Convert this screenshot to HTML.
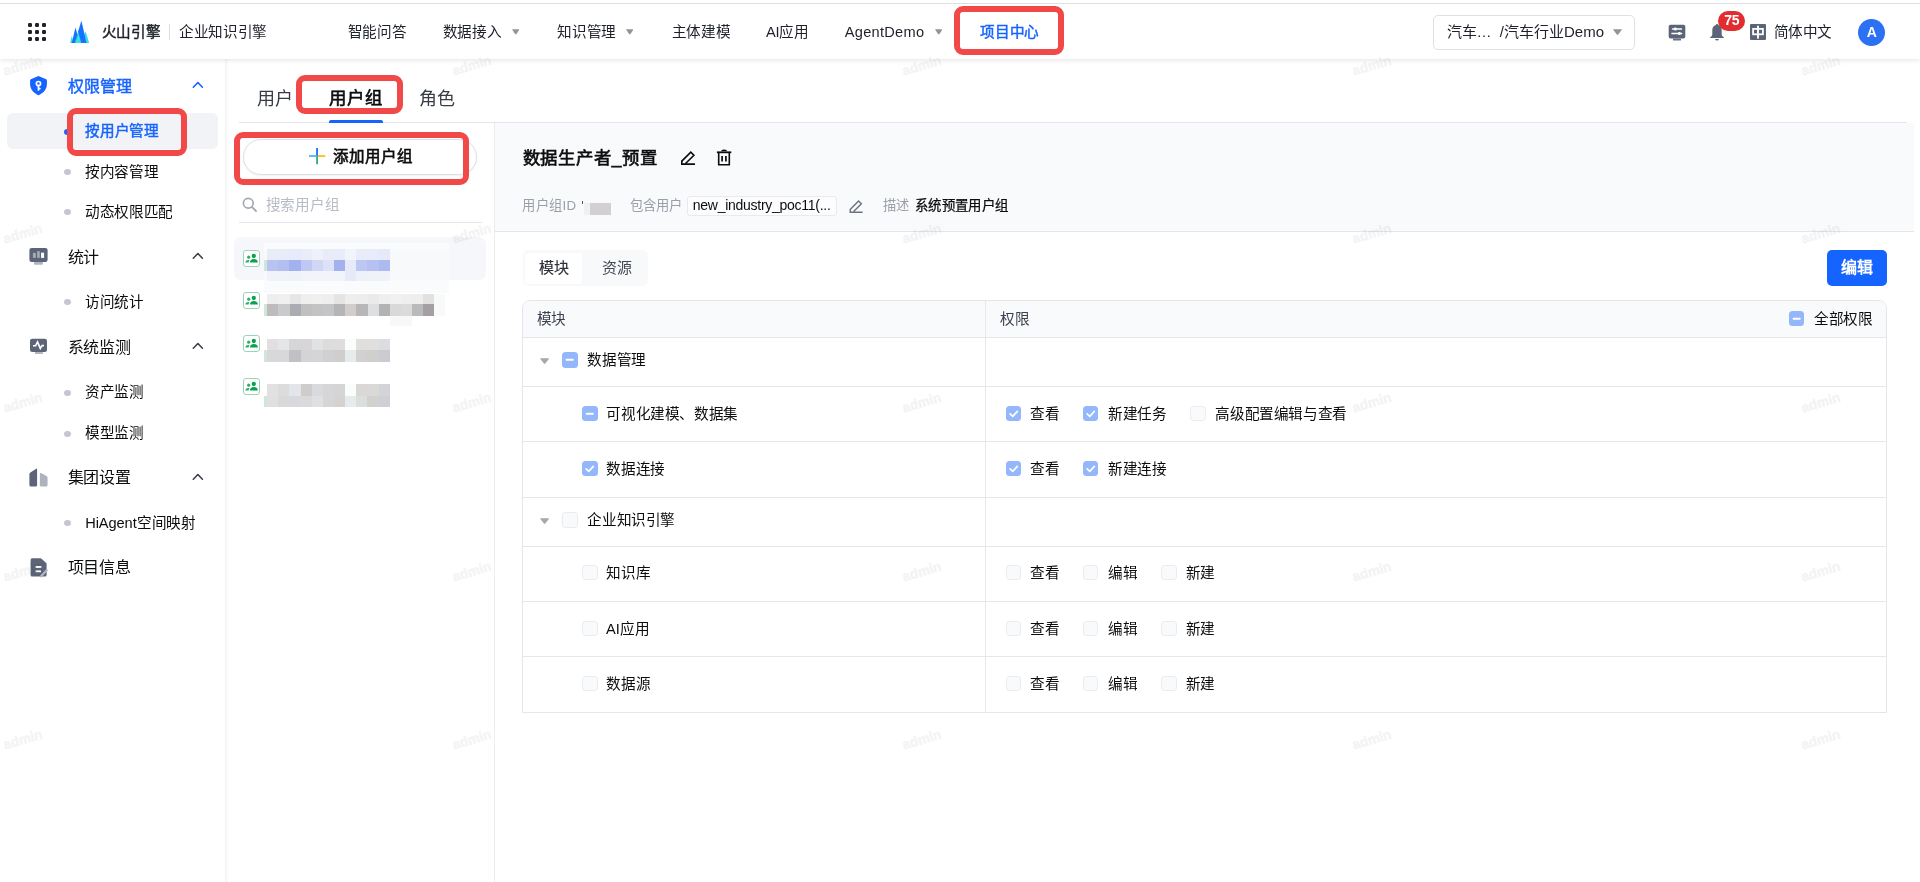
<!DOCTYPE html>
<html lang="zh-CN"><head><meta charset="utf-8"><title>权限管理 - 用户组</title>
<style>
*{box-sizing:border-box;margin:0;padding:0}
html,body{width:1920px;height:882px;overflow:hidden;background:#fff}
body{position:relative;font-family:"Liberation Sans",sans-serif;color:#0c0d0e;font-size:14.6px}
.a{position:absolute}
.t{position:absolute;white-space:nowrap;line-height:1}
.b{font-weight:700}
.m{-webkit-text-stroke-width:0.45px}
.s{-webkit-text-stroke-width:0.62px}
.wm{position:absolute;white-space:nowrap;font-size:13.5px;line-height:16px;font-weight:700;color:#000;-webkit-text-stroke:0.8px #000;opacity:.045;transform:translate(-50%,-50%) rotate(-16.5deg);width:48px;text-align:center;z-index:50;pointer-events:none}
.red{position:absolute;border:6px solid #f14848;border-radius:9px;z-index:40}
.dot{position:absolute;width:6.8px;height:6px;border-radius:50%;background:#c3c7d2;left:64.1px}
.cb{position:absolute;width:15.4px;height:15.4px;border-radius:3.5px}
.cb.e{background:#f9fafc;border:1px solid #e9ebf0}
.cb.c,.cb.i{background:#94b7fb}
.cb svg{position:absolute;left:0;top:0;width:100%;height:100%}
.hl{position:absolute;height:1px;background:#e4e6eb}
.vl{position:absolute;width:1px;background:#e6e8ed}
.gi{position:absolute;width:17px;height:17px;border:1px solid #9dd3b7;border-radius:3px;background:#fff}
.gi svg{position:absolute;left:0;top:0}
</style></head><body><div id="app" style="position:absolute;left:0;top:0;width:1920px;height:882px;will-change:transform">

<div class="a" style="left:0;top:0;width:1920px;height:59px;background:#fff;box-shadow:0 1px 5px rgba(0,0,0,.11);z-index:5"></div>
<div class="a" style="left:0;top:2.5px;width:1920px;height:1px;background:#dde0dd;z-index:6"></div>
<div id="hdr" class="a" style="left:0;top:0;width:1920px;height:59px;z-index:7">
<svg class="a" style="left:0;top:0" width="100" height="59" viewBox="0 0 100 59"><rect x="28" y="23" width="4" height="4" rx="1.2" fill="#1f2329"/><rect x="28" y="30" width="4" height="4" rx="1.2" fill="#1f2329"/><rect x="28" y="37" width="4" height="4" rx="1.2" fill="#1f2329"/><rect x="35" y="23" width="4" height="4" rx="1.2" fill="#1f2329"/><rect x="35" y="30" width="4" height="4" rx="1.2" fill="#1f2329"/><rect x="35" y="37" width="4" height="4" rx="1.2" fill="#1f2329"/><rect x="42" y="23" width="4" height="4" rx="1.2" fill="#1f2329"/><rect x="42" y="30" width="4" height="4" rx="1.2" fill="#1f2329"/><rect x="42" y="37" width="4" height="4" rx="1.2" fill="#1f2329"/><polygon points="70.2,43 71.8,35.5 73.6,43" fill="#3be0dc"/><polygon points="84.2,34 85.7,31.5 89.2,43 86.4,43" fill="#3be0dc"/><polygon points="74.8,43 78.6,29.5 81.6,43" fill="#3be0dc"/><polygon points="71.7,43 75.5,27.5 77.6,35 75,43" fill="#1673ff"/><polygon points="78.1,31.5 81.4,20.7 86.6,43 81.2,43" fill="#1673ff"/></svg>
<div class="t m" style="left:101.80px;top:25.00px;font-size:14.6px;height:14.6px;color:#1d2129;letter-spacing:-0.40px;">火山引擎</div>
<div class="a" style="left:169px;top:24px;width:1px;height:16px;background:#dcdee3"></div>
<div class="t " style="left:178.90px;top:25.00px;font-size:14.6px;height:14.6px;color:#1d2129;letter-spacing:-0.28px;">企业知识引擎</div>
<div class="t " style="left:347.70px;top:25.00px;font-size:14.6px;height:14.6px;color:#1d2129;letter-spacing:-0.30px;">智能问答</div>
<div class="t " style="left:442.70px;top:25.00px;font-size:14.6px;height:14.6px;color:#1d2129;letter-spacing:-0.30px;">数据接入</div>
<div class="t " style="left:557.40px;top:25.00px;font-size:14.6px;height:14.6px;color:#1d2129;letter-spacing:-0.30px;">知识管理</div>
<div class="t " style="left:671.80px;top:25.00px;font-size:14.6px;height:14.6px;color:#1d2129;letter-spacing:-0.30px;">主体建模</div>
<div class="t " style="left:766.00px;top:25.00px;font-size:14.6px;height:14.6px;color:#1d2129;letter-spacing:-0.30px;">AI应用</div>
<div class="t " style="left:844.80px;top:25.00px;font-size:14.6px;height:14.6px;color:#1d2129;letter-spacing:0.27px;">AgentDemo</div>
<div class="t m" style="left:980.40px;top:25.00px;font-size:14.6px;height:14.6px;color:#1664ff;letter-spacing:-0.30px;">项目中心</div>
<svg class="a" style="left:511.7px;top:29.2px" width="7.5" height="5.5" viewBox="0 0 7.5 5.5"><path d="M0.3 0.3H7.2Q7.5 0.6 7.1 1L4.25 5.2Q3.75 5.5 3.25 5.2L0.4 1Q0 0.6 0.3 0.3Z" fill="#8f959e"/></svg>
<svg class="a" style="left:625.8px;top:29.2px" width="7.5" height="5.5" viewBox="0 0 7.5 5.5"><path d="M0.3 0.3H7.2Q7.5 0.6 7.1 1L4.25 5.2Q3.75 5.5 3.25 5.2L0.4 1Q0 0.6 0.3 0.3Z" fill="#8f959e"/></svg>
<svg class="a" style="left:934.7px;top:29.2px" width="7.5" height="5.5" viewBox="0 0 7.5 5.5"><path d="M0.3 0.3H7.2Q7.5 0.6 7.1 1L4.25 5.2Q3.75 5.5 3.25 5.2L0.4 1Q0 0.6 0.3 0.3Z" fill="#8f959e"/></svg>
<div class="a" style="left:1433px;top:14.5px;width:202px;height:35px;border:1px solid #dde0e7;border-radius:5px;background:#fff"></div>
<div class="t " style="left:1446.50px;top:24.00px;font-size:15px;height:15px;color:#1d2129;">汽车…&nbsp;&nbsp;/汽车行业Demo</div>
<svg class="a" style="left:1613px;top:29.4px" width="9" height="6" viewBox="0 0 9 6"><path d="M0.3 0.3H8.7Q9 0.6 8.6 1L5.0 5.7Q4.5 6 4.0 5.7L0.4 1Q0 0.6 0.3 0.3Z" fill="#8f959e"/></svg>
<svg class="a" style="left:1666px;top:22px" width="22" height="22" viewBox="0 0 22 22"><rect x="2.7" y="2.8" width="16.6" height="13.8" rx="1.8" fill="#5c6578"/><rect x="7" y="16.6" width="8" height="2" rx="0.6" fill="#6a7283"/><rect x="5.8" y="6.3" width="10.4" height="1.4" rx="0.7" fill="#fff"/><rect x="8" y="5.6" width="2.6" height="2.8" rx="1" fill="#fff"/><rect x="5.2" y="10.8" width="11.2" height="1.4" rx="0.7" fill="#fff"/><rect x="12" y="10.1" width="2.6" height="2.8" rx="1" fill="#fff"/></svg>
<svg class="a" style="left:1708px;top:22px" width="18" height="20" viewBox="0 0 18 20"><path d="M9 2C9.7 2 10.1 2.5 10.1 3.1C12.4 3.7 13.7 5.6 13.7 8V12.2C13.7 13.4 14.6 14.6 15.9 15.4C16.2 15.6 16.1 16 15.7 16H2.3C1.9 16 1.8 15.6 2.1 15.4C3.4 14.6 4.3 13.4 4.3 12.2V8C4.3 5.6 5.6 3.7 7.9 3.1C7.9 2.5 8.3 2 9 2Z" fill="#5c6578"/><path d="M7 17H11Q10.4 18.6 9 18.6Q7.6 18.6 7 17Z" fill="#5c6578"/></svg>
<div class="a" style="left:1718.4px;top:10.6px;width:27px;height:20.2px;border-radius:10.1px;background:#e22c30;z-index:2"></div>
<div class="t b" style="left:1724.30px;top:13.00px;font-size:14px;height:14px;color:#fff;z-index:3;letter-spacing:-0.3px">75</div>
<div class="a" style="left:1750px;top:24px;width:16px;height:16px;background:#5c6578;border-radius:1px"></div>
<svg class="a" style="left:1750px;top:24px" width="16" height="16" viewBox="0 0 16 16"><title>中</title><rect x="3.1" y="4.9" width="9.8" height="5.4" fill="none" stroke="#fff" stroke-width="1.8"/><rect x="7.05" y="1.7" width="1.9" height="12.9" fill="#fff"/></svg>
<div class="t " style="left:1773.50px;top:25.00px;font-size:14.6px;height:14.6px;color:#1d2129;letter-spacing:-0.45px;">简体中文</div>
<div class="a" style="left:1858px;top:19px;width:27.4px;height:27.4px;border-radius:50%;background:#2c70f4"></div>
<div class="t b" style="left:1866.70px;top:25.00px;font-size:14px;height:14px;color:#fff;">A</div>
</div>
<div class="a" style="left:224.6px;top:59px;width:4.6px;height:823px;background:linear-gradient(to right,#f3f3f4 0%,#f6f6f7 25%,#fbfbfb 60%,#fff 100%)"></div>
<div class="a" style="left:7px;top:113px;width:211px;height:36px;border-radius:6px;background:#f2f3f6"></div>
<svg class="a" style="left:28px;top:74px" width="22" height="23" viewBox="0 0 22 23"><path d="M10.5 1.9L18.2 5.2Q18.9 5.5 18.9 6.3V10.6C18.7 15.2 15.6 19.1 11.2 21Q10.5 21.3 9.8 21C5.4 19.1 2.3 15.2 2.1 10.6V6.3Q2.1 5.5 2.8 5.2Z" fill="#1664ff"/><circle cx="10.45" cy="9.6" r="2.1" fill="none" stroke="#fff" stroke-width="1.7"/><path d="M10.45 11.6V15.9M10.45 14.2L11.9 14.6" stroke="#fff" stroke-width="1.7" fill="none" stroke-linecap="round"/></svg>
<div class="t m" style="left:67.80px;top:79.00px;font-size:16px;height:16px;color:#1664ff;">权限管理</div>
<svg class="a" style="left:190.7px;top:78.5px" width="14" height="10" viewBox="0 0 14 10"><path d="M2.3 8.2L6.9 3.5L11.4 8.2" fill="none" stroke="#1664ff" stroke-width="1.6" stroke-linecap="round" stroke-linejoin="round"/></svg>
<div class="dot" style="top:128.5px;background:#1664ff"></div>
<div class="t m" style="left:85.30px;top:124.00px;font-size:14.6px;height:14.6px;color:#1664ff;letter-spacing:-0.38px;">按用户管理</div>
<div class="dot" style="top:169.4px"></div>
<div class="t " style="left:85.20px;top:165.00px;font-size:14.6px;height:14.6px;color:#0c0d0e;letter-spacing:-0.38px;">按内容管理</div>
<div class="dot" style="top:209.4px"></div>
<div class="t " style="left:85.20px;top:205.00px;font-size:14.6px;height:14.6px;color:#0c0d0e;letter-spacing:-0.38px;">动态权限匹配</div>
<div class="dot" style="top:299.4px"></div>
<div class="t " style="left:85.20px;top:295.00px;font-size:14.6px;height:14.6px;color:#0c0d0e;letter-spacing:-0.38px;">访问统计</div>
<div class="dot" style="top:389.5px"></div>
<div class="t " style="left:85.20px;top:385.00px;font-size:14.6px;height:14.6px;color:#0c0d0e;letter-spacing:-0.38px;">资产监测</div>
<div class="dot" style="top:430.5px"></div>
<div class="t " style="left:85.20px;top:426.00px;font-size:14.6px;height:14.6px;color:#0c0d0e;letter-spacing:-0.38px;">模型监测</div>
<div class="dot" style="top:520.3px"></div>
<div class="t " style="left:85.20px;top:516.00px;font-size:14.6px;height:14.6px;color:#0c0d0e;letter-spacing:-0.07px;">HiAgent空间映射</div>
<div class="t " style="left:67.50px;top:250.00px;font-size:16px;height:16px;color:#0c0d0e;letter-spacing:-0.15px;">统计</div>
<div class="t " style="left:67.50px;top:340.00px;font-size:16px;height:16px;color:#0c0d0e;letter-spacing:-0.15px;">系统监测</div>
<div class="t " style="left:67.50px;top:470.00px;font-size:16px;height:16px;color:#0c0d0e;letter-spacing:-0.15px;">集团设置</div>
<div class="t " style="left:67.50px;top:560.00px;font-size:16px;height:16px;color:#0c0d0e;letter-spacing:-0.15px;">项目信息</div>
<svg class="a" style="left:190.7px;top:250.2px" width="14" height="10" viewBox="0 0 14 10"><path d="M2.3 8.2L6.9 3.5L11.4 8.2" fill="none" stroke="#3a3f4a" stroke-width="1.6" stroke-linecap="round" stroke-linejoin="round"/></svg>
<svg class="a" style="left:190.7px;top:339.8px" width="14" height="10" viewBox="0 0 14 10"><path d="M2.3 8.2L6.9 3.5L11.4 8.2" fill="none" stroke="#3a3f4a" stroke-width="1.6" stroke-linecap="round" stroke-linejoin="round"/></svg>
<svg class="a" style="left:190.7px;top:470.6px" width="14" height="10" viewBox="0 0 14 10"><path d="M2.3 8.2L6.9 3.5L11.4 8.2" fill="none" stroke="#3a3f4a" stroke-width="1.6" stroke-linecap="round" stroke-linejoin="round"/></svg>
<svg class="a" style="left:28px;top:246px" width="22" height="21" viewBox="0 0 22 21"><rect x="6" y="15.5" width="8.9" height="3.2" rx="1" fill="#b0b5c0"/><rect x="1.4" y="1.9" width="18.2" height="14.1" rx="2.2" fill="#5c6578"/><rect x="4.9" y="6.9" width="2.9" height="5" fill="#a4a9b6"/><rect x="9.1" y="5.2" width="2.7" height="6.7" fill="#a4a9b6"/><rect x="13" y="6.7" width="3.1" height="5.2" fill="#fff"/></svg>
<svg class="a" style="left:28px;top:336px" width="22" height="21" viewBox="0 0 22 21"><rect x="7" y="15.5" width="7.9" height="2.6" rx="0.6" fill="#b0b5c0"/><rect x="2" y="2.7" width="17" height="13.3" rx="2.2" fill="#5c6578"/><path d="M5 9.8H7.6L9.5 5.9L12.3 12.4L14 9.6H16" fill="none" stroke="#fff" stroke-width="1.6" stroke-linejoin="miter"/></svg>
<svg class="a" style="left:28px;top:466px" width="22" height="23" viewBox="0 0 22 23"><path d="M1.4 8.2Q1.4 7 2.4 6.4L8.2 2.7Q9.1 2.2 9.1 3.3V19.1Q9.1 20.6 7.6 20.6H2.9Q1.4 20.6 1.4 19.1Z" fill="#5c6578"/><path d="M11.85 7.9Q11.85 6.6 13 7.1L18.5 9.9Q19.55 10.4 19.55 11.6V19.1Q19.55 20.6 18.05 20.6H13.35Q11.85 20.6 11.85 19.1Z" fill="#aeb2bc"/></svg>
<svg class="a" style="left:28px;top:556px" width="22" height="23" viewBox="0 0 22 23"><path d="M4.1 2.3H12.6Q13.2 2.3 13.6 2.7L18.2 7Q18.6 7.4 18.6 8V19.1Q18.6 20.6 17.1 20.6H4.1Q2.6 20.6 2.6 19.1V3.8Q2.6 2.3 4.1 2.3Z" fill="#5c6578"/><rect x="7.6" y="10" width="5.8" height="1.9" fill="#fff"/><rect x="7.6" y="14.4" width="5.4" height="1.8" fill="#fff"/><path d="M12.4 20.9L19.3 13.6" stroke="#b0b5c0" stroke-width="2.2"/></svg>
<div class="t " style="left:256.60px;top:90.00px;font-size:18px;height:18px;color:#373c44;">用户</div>
<div class="t s" style="left:329.00px;top:90.00px;font-size:17.4px;height:17.4px;color:#0c0d0e;letter-spacing:1.10px;">用户组</div>
<div class="t " style="left:418.50px;top:90.00px;font-size:18px;height:18px;color:#373c44;">角色</div>
<div class="hl" style="left:239px;top:122px;width:1668px"></div>
<div class="a" style="left:329px;top:119.8px;width:54px;height:3.2px;background:#1664ff;border-radius:2px 2px 0 0"></div>
<div class="vl" style="left:494px;top:123px;height:759px;background:#eaecf0"></div>
<div class="a" style="left:243px;top:139px;width:234px;height:36px;border:1px solid #dcdfe4;border-radius:18px;background:#fff;box-shadow:0 1px 2px rgba(0,0,0,.06)"></div>
<svg class="a" style="left:309px;top:148px" width="17" height="17" viewBox="0 0 17 17"><rect x="7.2" y="0" width="1.7" height="8.1" fill="#1664ff"/><rect x="7.2" y="8.1" width="1.7" height="8.2" fill="#2ba471"/><rect x="0" y="7.2" width="8" height="1.7" fill="#3cb1ff"/><rect x="8.9" y="7.2" width="7.4" height="1.7" fill="#ffb700"/></svg>
<div class="t s" style="left:333.40px;top:149.00px;font-size:15.5px;height:15.5px;color:#0c0d0e;letter-spacing:-0.15px;">添加用户组</div>
<svg class="a" style="left:241px;top:196px" width="17" height="17" viewBox="0 0 17 17"><circle cx="7.3" cy="7.2" r="4.9" fill="none" stroke="#a3a9b3" stroke-width="1.7"/><path d="M10.9 10.9L15 15" stroke="#a3a9b3" stroke-width="1.8" stroke-linecap="round"/></svg>
<div class="t " style="left:265.80px;top:198.00px;font-size:14.6px;height:14.6px;color:#b7bcc6;letter-spacing:-0.30px;">搜索用户组</div>
<div class="hl" style="left:239px;top:222px;width:243px"></div>
<div class="a" style="left:234px;top:237px;width:252px;height:43px;border-radius:7px;background:#f6f7fa"></div>
<div class="a" style="left:264px;top:243px;width:185px;height:7.5px;background:#fafbfc"></div>
<div class="a" style="left:264px;top:250.5px;width:185px;height:29.5px;background:#f8f9fb"></div>
<div class="a" style="left:264px;top:280px;width:185px;height:13px;background:#fafbfc"></div>
<div class="gi" style="left:243px;top:250px"><svg width="15" height="15" viewBox="0 0 15 15"><circle cx="9.8" cy="5.0" r="2.15" fill="#0ba24f"/><path d="M5.9 11.1Q5.9 11.5 6.4 11.5H13.5Q14 11.5 13.9 11.1Q13.3 7.9 9.9 7.9Q6.5 7.9 5.9 11.1Z" fill="#0ba24f"/><circle cx="4.7" cy="6.2" r="1.6" fill="#33ae69"/><path d="M1.3 11Q1.2 11.4 1.7 11.4H4.6Q5 9.7 5.6 9.2Q5.2 8.9 4.5 8.9Q1.9 8.9 1.3 11Z" fill="#33ae69"/></svg></div>
<div class="gi" style="left:243px;top:292.2px"><svg width="15" height="15" viewBox="0 0 15 15"><circle cx="9.8" cy="5.0" r="2.15" fill="#0ba24f"/><path d="M5.9 11.1Q5.9 11.5 6.4 11.5H13.5Q14 11.5 13.9 11.1Q13.3 7.9 9.9 7.9Q6.5 7.9 5.9 11.1Z" fill="#0ba24f"/><circle cx="4.7" cy="6.2" r="1.6" fill="#33ae69"/><path d="M1.3 11Q1.2 11.4 1.7 11.4H4.6Q5 9.7 5.6 9.2Q5.2 8.9 4.5 8.9Q1.9 8.9 1.3 11Z" fill="#33ae69"/></svg></div>
<div class="gi" style="left:243px;top:335px"><svg width="15" height="15" viewBox="0 0 15 15"><circle cx="9.8" cy="5.0" r="2.15" fill="#0ba24f"/><path d="M5.9 11.1Q5.9 11.5 6.4 11.5H13.5Q14 11.5 13.9 11.1Q13.3 7.9 9.9 7.9Q6.5 7.9 5.9 11.1Z" fill="#0ba24f"/><circle cx="4.7" cy="6.2" r="1.6" fill="#33ae69"/><path d="M1.3 11Q1.2 11.4 1.7 11.4H4.6Q5 9.7 5.6 9.2Q5.2 8.9 4.5 8.9Q1.9 8.9 1.3 11Z" fill="#33ae69"/></svg></div>
<div class="gi" style="left:243px;top:378px"><svg width="15" height="15" viewBox="0 0 15 15"><circle cx="9.8" cy="5.0" r="2.15" fill="#0ba24f"/><path d="M5.9 11.1Q5.9 11.5 6.4 11.5H13.5Q14 11.5 13.9 11.1Q13.3 7.9 9.9 7.9Q6.5 7.9 5.9 11.1Z" fill="#0ba24f"/><circle cx="4.7" cy="6.2" r="1.6" fill="#33ae69"/><path d="M1.3 11Q1.2 11.4 1.7 11.4H4.6Q5 9.7 5.6 9.2Q5.2 8.9 4.5 8.9Q1.9 8.9 1.3 11Z" fill="#33ae69"/></svg></div>
<div class="a" style="left:267.20px;top:249px;width:11.44px;height:10.60px;background:#e8ebf8"></div>
<div class="a" style="left:278.34px;top:249px;width:11.44px;height:10.60px;background:#e8ebf8"></div>
<div class="a" style="left:289.48px;top:249px;width:11.44px;height:10.60px;background:#e7eaf8"></div>
<div class="a" style="left:300.62px;top:249px;width:11.44px;height:10.60px;background:#eaedf9"></div>
<div class="a" style="left:311.76px;top:249px;width:11.44px;height:10.60px;background:#eef0fa"></div>
<div class="a" style="left:322.90px;top:249px;width:11.44px;height:10.60px;background:#e8ebf8"></div>
<div class="a" style="left:334.04px;top:249px;width:11.44px;height:10.60px;background:#e8ebf8"></div>
<div class="a" style="left:345.18px;top:249px;width:11.44px;height:10.60px;background:#f2f4fb"></div>
<div class="a" style="left:356.32px;top:249px;width:11.44px;height:10.60px;background:#e9ecf8"></div>
<div class="a" style="left:367.46px;top:249px;width:11.44px;height:10.60px;background:#e8ebf8"></div>
<div class="a" style="left:378.60px;top:249px;width:11.44px;height:10.60px;background:#e6e9f8"></div>
<div class="a" style="left:267.20px;top:259.6px;width:11.44px;height:11.70px;background:#b8c3f2"></div>
<div class="a" style="left:278.34px;top:259.6px;width:11.44px;height:11.70px;background:#b3bff0"></div>
<div class="a" style="left:289.48px;top:259.6px;width:11.44px;height:11.70px;background:#a3b2ee"></div>
<div class="a" style="left:300.62px;top:259.6px;width:11.44px;height:11.70px;background:#bfc8f3"></div>
<div class="a" style="left:311.76px;top:259.6px;width:11.44px;height:11.70px;background:#cfd7f5"></div>
<div class="a" style="left:322.90px;top:259.6px;width:11.44px;height:11.70px;background:#dde2f8"></div>
<div class="a" style="left:334.04px;top:259.6px;width:11.44px;height:11.70px;background:#a3b1ee"></div>
<div class="a" style="left:345.18px;top:259.6px;width:11.44px;height:11.70px;background:#e6eaf9"></div>
<div class="a" style="left:356.32px;top:259.6px;width:11.44px;height:11.70px;background:#bcc7f2"></div>
<div class="a" style="left:367.46px;top:259.6px;width:11.44px;height:11.70px;background:#b6c1f1"></div>
<div class="a" style="left:378.60px;top:259.6px;width:11.44px;height:11.70px;background:#adbaf0"></div>
<div class="a" style="left:267.20px;top:271.3px;width:11.44px;height:10.20px;background:#f1f3fa"></div>
<div class="a" style="left:278.34px;top:271.3px;width:11.44px;height:10.20px;background:#f1f3fa"></div>
<div class="a" style="left:289.48px;top:271.3px;width:11.44px;height:10.20px;background:#f0f2fa"></div>
<div class="a" style="left:300.62px;top:271.3px;width:11.44px;height:10.20px;background:#f2f4fb"></div>
<div class="a" style="left:311.76px;top:271.3px;width:11.44px;height:10.20px;background:#f3f4fb"></div>
<div class="a" style="left:322.90px;top:271.3px;width:11.44px;height:10.20px;background:#f3f4fb"></div>
<div class="a" style="left:334.04px;top:271.3px;width:11.44px;height:10.20px;background:#f2f4fb"></div>
<div class="a" style="left:345.18px;top:271.3px;width:11.44px;height:10.20px;background:#e5e9f8"></div>
<div class="a" style="left:356.32px;top:271.3px;width:11.44px;height:10.20px;background:#eef1fa"></div>
<div class="a" style="left:367.46px;top:271.3px;width:11.44px;height:10.20px;background:#f0f2fa"></div>
<div class="a" style="left:378.60px;top:271.3px;width:11.44px;height:10.20px;background:#f0f2fa"></div>
<div class="a" style="left:264.1px;top:259.6px;width:3.1px;height:11.7px;background:#cfe6da"></div>
<div class="a" style="left:267.20px;top:294.3px;width:11.45px;height:10.10px;background:#efeeee"></div>
<div class="a" style="left:278.35px;top:294.3px;width:11.45px;height:10.10px;background:#f0f0f0"></div>
<div class="a" style="left:289.50px;top:294.3px;width:11.45px;height:10.10px;background:#e6e6e6"></div>
<div class="a" style="left:300.65px;top:294.3px;width:11.45px;height:10.10px;background:#f0efef"></div>
<div class="a" style="left:311.80px;top:294.3px;width:11.45px;height:10.10px;background:#f0f0ef"></div>
<div class="a" style="left:322.95px;top:294.3px;width:11.45px;height:10.10px;background:#eeeeee"></div>
<div class="a" style="left:334.10px;top:294.3px;width:11.45px;height:10.10px;background:#e4e4e4"></div>
<div class="a" style="left:345.25px;top:294.3px;width:11.45px;height:10.10px;background:#efeeed"></div>
<div class="a" style="left:356.40px;top:294.3px;width:11.45px;height:10.10px;background:#eeeded"></div>
<div class="a" style="left:367.55px;top:294.3px;width:11.45px;height:10.10px;background:#ebeaea"></div>
<div class="a" style="left:378.70px;top:294.3px;width:11.45px;height:10.10px;background:#efefef"></div>
<div class="a" style="left:389.85px;top:294.3px;width:11.45px;height:10.10px;background:#f1f1f1"></div>
<div class="a" style="left:401.00px;top:294.3px;width:11.45px;height:10.10px;background:#f0efef"></div>
<div class="a" style="left:412.15px;top:294.3px;width:11.45px;height:10.10px;background:#eeeeee"></div>
<div class="a" style="left:423.30px;top:294.3px;width:11.45px;height:10.10px;background:#e3e1e0"></div>
<div class="a" style="left:267.20px;top:304.4px;width:11.45px;height:11.80px;background:#bfbabb"></div>
<div class="a" style="left:278.35px;top:304.4px;width:11.45px;height:11.80px;background:#c9cacc"></div>
<div class="a" style="left:289.50px;top:304.4px;width:11.45px;height:11.80px;background:#a9acb1"></div>
<div class="a" style="left:300.65px;top:304.4px;width:11.45px;height:11.80px;background:#c2bfc0"></div>
<div class="a" style="left:311.80px;top:304.4px;width:11.45px;height:11.80px;background:#c4c3c4"></div>
<div class="a" style="left:322.95px;top:304.4px;width:11.45px;height:11.80px;background:#c4c5c6"></div>
<div class="a" style="left:334.10px;top:304.4px;width:11.45px;height:11.80px;background:#b5b5b7"></div>
<div class="a" style="left:345.25px;top:304.4px;width:11.45px;height:11.80px;background:#d2cdcb"></div>
<div class="a" style="left:356.40px;top:304.4px;width:11.45px;height:11.80px;background:#b7b7ba"></div>
<div class="a" style="left:367.55px;top:304.4px;width:11.45px;height:11.80px;background:#dedfe1"></div>
<div class="a" style="left:378.70px;top:304.4px;width:11.45px;height:11.80px;background:#b3b3b5"></div>
<div class="a" style="left:389.85px;top:304.4px;width:11.45px;height:11.80px;background:#d9d9da"></div>
<div class="a" style="left:401.00px;top:304.4px;width:11.45px;height:11.80px;background:#dcdbdb"></div>
<div class="a" style="left:412.15px;top:304.4px;width:11.45px;height:11.80px;background:#b9babd"></div>
<div class="a" style="left:423.30px;top:304.4px;width:11.45px;height:11.80px;background:#a49fa2"></div>
<div class="a" style="left:264.1px;top:304.4px;width:3.1px;height:11.8px;background:#cfe6da"></div>
<div class="a" style="left:434.4px;top:294.3px;width:10.6px;height:21.9px;background:#f8fafa"></div>
<div class="a" style="left:389.8px;top:316.4px;width:22.3px;height:9.5px;background:#f8f8f9"></div>
<div class="a" style="left:267.20px;top:339px;width:11.44px;height:11.40px;background:#e1dfe0"></div>
<div class="a" style="left:278.34px;top:339px;width:11.44px;height:11.40px;background:#e4e5e6"></div>
<div class="a" style="left:289.48px;top:339px;width:11.44px;height:11.40px;background:#d6d6d8"></div>
<div class="a" style="left:300.62px;top:339px;width:11.44px;height:11.40px;background:#d7d5d7"></div>
<div class="a" style="left:311.76px;top:339px;width:11.44px;height:11.40px;background:#e1e3e3"></div>
<div class="a" style="left:322.90px;top:339px;width:11.44px;height:11.40px;background:#dcdcdd"></div>
<div class="a" style="left:334.04px;top:339px;width:11.44px;height:11.40px;background:#dedddc"></div>
<div class="a" style="left:345.18px;top:339px;width:11.44px;height:11.40px;background:#fbfdfd"></div>
<div class="a" style="left:356.32px;top:339px;width:11.44px;height:11.40px;background:#e1dfde"></div>
<div class="a" style="left:367.46px;top:339px;width:11.44px;height:11.40px;background:#e0dfde"></div>
<div class="a" style="left:378.60px;top:339px;width:11.44px;height:11.40px;background:#dcdde0"></div>
<div class="a" style="left:267.20px;top:350.4px;width:11.44px;height:11.20px;background:#d8d7d9"></div>
<div class="a" style="left:278.34px;top:350.4px;width:11.44px;height:11.20px;background:#d8d8da"></div>
<div class="a" style="left:289.48px;top:350.4px;width:11.44px;height:11.20px;background:#bfc1c4"></div>
<div class="a" style="left:300.62px;top:350.4px;width:11.44px;height:11.20px;background:#d5d3d5"></div>
<div class="a" style="left:311.76px;top:350.4px;width:11.44px;height:11.20px;background:#d5d5d8"></div>
<div class="a" style="left:322.90px;top:350.4px;width:11.44px;height:11.20px;background:#d0d0d2"></div>
<div class="a" style="left:334.04px;top:350.4px;width:11.44px;height:11.20px;background:#d0cecd"></div>
<div class="a" style="left:345.18px;top:350.4px;width:11.44px;height:11.20px;background:#e6ecee"></div>
<div class="a" style="left:356.32px;top:350.4px;width:11.44px;height:11.20px;background:#d0d1d0"></div>
<div class="a" style="left:367.46px;top:350.4px;width:11.44px;height:11.20px;background:#d1cfce"></div>
<div class="a" style="left:378.60px;top:350.4px;width:11.44px;height:11.20px;background:#cbccd1"></div>
<div class="a" style="left:264.1px;top:350.4px;width:3.1px;height:11.2px;background:#cfe6da"></div>
<div class="a" style="left:267.20px;top:384.3px;width:11.44px;height:11.30px;background:#e2e0e1"></div>
<div class="a" style="left:278.34px;top:384.3px;width:11.44px;height:11.30px;background:#dcdcdd"></div>
<div class="a" style="left:289.48px;top:384.3px;width:11.44px;height:11.30px;background:#e3e5e8"></div>
<div class="a" style="left:300.62px;top:384.3px;width:11.44px;height:11.30px;background:#cfcdcc"></div>
<div class="a" style="left:311.76px;top:384.3px;width:11.44px;height:11.30px;background:#d9dadd"></div>
<div class="a" style="left:322.90px;top:384.3px;width:11.44px;height:11.30px;background:#d7d6d7"></div>
<div class="a" style="left:334.04px;top:384.3px;width:11.44px;height:11.30px;background:#d6d5d5"></div>
<div class="a" style="left:345.18px;top:384.3px;width:11.44px;height:11.30px;background:#fbfdfd"></div>
<div class="a" style="left:356.32px;top:384.3px;width:11.44px;height:11.30px;background:#dad8d7"></div>
<div class="a" style="left:367.46px;top:384.3px;width:11.44px;height:11.30px;background:#dbd9d8"></div>
<div class="a" style="left:378.60px;top:384.3px;width:11.44px;height:11.30px;background:#d3d4da"></div>
<div class="a" style="left:267.20px;top:395.6px;width:11.44px;height:11.10px;background:#e1dfdf"></div>
<div class="a" style="left:278.34px;top:395.6px;width:11.44px;height:11.10px;background:#d9d9da"></div>
<div class="a" style="left:289.48px;top:395.6px;width:11.44px;height:11.10px;background:#d8d9dc"></div>
<div class="a" style="left:300.62px;top:395.6px;width:11.44px;height:11.10px;background:#dbd9db"></div>
<div class="a" style="left:311.76px;top:395.6px;width:11.44px;height:11.10px;background:#dfe0e1"></div>
<div class="a" style="left:322.90px;top:395.6px;width:11.44px;height:11.10px;background:#d6d6d8"></div>
<div class="a" style="left:334.04px;top:395.6px;width:11.44px;height:11.10px;background:#d5d3d2"></div>
<div class="a" style="left:345.18px;top:395.6px;width:11.44px;height:11.10px;background:#e6ecee"></div>
<div class="a" style="left:356.32px;top:395.6px;width:11.44px;height:11.10px;background:#dcdedd"></div>
<div class="a" style="left:367.46px;top:395.6px;width:11.44px;height:11.10px;background:#d3d1cf"></div>
<div class="a" style="left:378.60px;top:395.6px;width:11.44px;height:11.10px;background:#cfd0d6"></div>
<div class="a" style="left:264.1px;top:395.6px;width:3.1px;height:11.1px;background:#cfe6da"></div>
<div class="a" style="left:495px;top:123px;width:1419px;height:108px;background:#f9fafc"></div>
<div class="hl" style="left:495px;top:231px;width:1419px"></div>
<div class="t s" style="left:522.60px;top:150.00px;font-size:17.4px;height:17.4px;color:#0c0d0e;letter-spacing:0.85px;">数据生产者_预置</div>
<svg class="a" style="left:679px;top:149px" width="18" height="18" viewBox="0 0 18 18"><path d="M2.8 12.1L11.8 3.1L14.9 6.2L6.3 14.8" fill="none" stroke="#0c0d0e" stroke-width="1.6" stroke-linejoin="miter"/><path d="M2.8 11.6V15.1H16" fill="none" stroke="#0c0d0e" stroke-width="1.6"/></svg>
<svg class="a" style="left:715px;top:148px" width="18" height="19" viewBox="0 0 18 19"><path d="M1.9 4.3H16.3" stroke="#0c0d0e" stroke-width="1.8"/><path d="M6.6 2.9Q9.1 1.6 11.6 2.9" stroke="#0c0d0e" stroke-width="1.6" fill="none"/><path d="M3.7 4.5V16.8H14.3V4.5" fill="none" stroke="#0c0d0e" stroke-width="1.6"/><path d="M7.1 8V13.5M10.9 8V13.5" stroke="#0c0d0e" stroke-width="1.7"/></svg>
<div class="t " style="left:522.40px;top:199.00px;font-size:13.3px;height:13.3px;color:#9a9fa9;letter-spacing:0.35px;">用户组ID</div>
<div class="a" style="left:581.5px;top:200.5px;width:1.3px;height:3px;background:#555"></div>
<div class="a" style="left:584px;top:203px;width:6px;height:12px;background:#f1f1f2"></div>
<div class="a" style="left:590px;top:203px;width:21px;height:12px;background:#d2d0d0"></div>
<div class="t " style="left:629.90px;top:199.00px;font-size:13.3px;height:13.3px;color:#9a9fa9;letter-spacing:0.20px;">包含用户</div>
<div class="a" style="left:687px;top:196px;width:150px;height:19.5px;border:1px solid #e8eaef;border-radius:3px;background:#fdfdfe"></div>
<div class="t " style="left:692.80px;top:198.00px;font-size:14px;height:14px;color:#0c0d0e;letter-spacing:-0.27px">new_industry_poc11(...</div>
<svg class="a" style="left:848px;top:198px" width="17" height="17" viewBox="0 0 17 17"><path d="M2.2 11.4L10.6 3L13.4 5.8L5.4 13.8" fill="none" stroke="#6b7280" stroke-width="1.4"/><path d="M2.2 11V14.3H14.6" fill="none" stroke="#6b7280" stroke-width="1.4"/></svg>
<div class="t " style="left:883.20px;top:199.00px;font-size:13.3px;height:13.3px;color:#9a9fa9;letter-spacing:0.30px;">描述</div>
<div class="t " style="left:914.70px;top:199.00px;font-size:13.4px;height:13.4px;color:#0c0d0e;-webkit-text-stroke-width:0.25px;letter-spacing:0.45px;">系统预置用户组</div>
<div class="a" style="left:522.5px;top:250px;width:125.5px;height:35.5px;border-radius:5px;background:#f8f9fb"></div>
<div class="a" style="left:525px;top:252.5px;width:57px;height:31.3px;border-radius:4px;background:#fff"></div>
<div class="t " style="left:539.10px;top:260.00px;font-size:15px;height:15px;color:#2c3038;-webkit-text-stroke-width:0.2px;">模块</div>
<div class="t " style="left:602.10px;top:260.00px;font-size:15px;height:15px;color:#454a55;">资源</div>
<div class="a" style="left:1827px;top:250px;width:60px;height:36px;border-radius:5px;background:#1664ff"></div>
<div class="t b" style="left:1841.00px;top:260.00px;font-size:16px;height:16px;color:#fff;">编辑</div>
<div class="a" style="left:522px;top:300px;width:1365px;height:413.29999999999995px;border:1px solid #e4e6eb;border-radius:8px 8px 0 0;background:#fff;overflow:hidden"><div class="a" style="left:0;top:0;width:1364px;height:36.3px;background:#f9fafc"></div></div>
<div class="hl" style="left:523px;top:337.3px;width:1363.5px"></div>
<div class="hl" style="left:523px;top:386px;width:1363.5px"></div>
<div class="hl" style="left:523px;top:441.2px;width:1363.5px"></div>
<div class="hl" style="left:523px;top:497.3px;width:1363.5px"></div>
<div class="hl" style="left:523px;top:546px;width:1363.5px"></div>
<div class="hl" style="left:523px;top:601.2px;width:1363.5px"></div>
<div class="hl" style="left:523px;top:656.4px;width:1363.5px"></div>
<div class="vl" style="left:985px;top:301px;height:412.29999999999995px"></div>
<div class="t " style="left:536.50px;top:312.00px;font-size:14.6px;height:14.6px;color:#3c4150;letter-spacing:-0.38px;">模块</div>
<div class="t " style="left:1000.20px;top:312.00px;font-size:14.6px;height:14.6px;color:#3c4150;letter-spacing:-0.38px;">权限</div>
<div class="t " style="left:1814.20px;top:312.00px;font-size:14.6px;height:14.6px;color:#0c0d0e;letter-spacing:-0.38px;">全部权限</div>
<div class="cb i" style="left:1789.1px;top:310.7px"><svg viewBox="0 0 16 16"><rect x="4" y="6.9" width="8" height="2.2" rx="0.6" fill="#fff"/></svg></div>
<svg class="a" style="left:540.2px;top:357.5px" width="9.2" height="6" viewBox="0 0 9.2 6"><path d="M0.3 0.3H8.899999999999999Q9.2 0.6 8.799999999999999 1L5.1 5.7Q4.6 6 4.1 5.7L0.4 1Q0 0.6 0.3 0.3Z" fill="#a2a7b0"/></svg>
<div class="cb i" style="left:562.3px;top:352.3px"><svg viewBox="0 0 16 16"><rect x="4" y="6.9" width="8" height="2.2" rx="0.6" fill="#fff"/></svg></div>
<div class="t " style="left:587.30px;top:353.00px;font-size:14.6px;height:14.6px;color:#0c0d0e;letter-spacing:-0.38px;">数据管理</div>
<div class="cb i" style="left:582.2px;top:405.6px"><svg viewBox="0 0 16 16"><rect x="4" y="6.9" width="8" height="2.2" rx="0.6" fill="#fff"/></svg></div>
<div class="t " style="left:606.40px;top:407.00px;font-size:14.6px;height:14.6px;color:#0c0d0e;letter-spacing:-0.38px;">可视化建模、数据集</div>
<div class="cb c" style="left:1005.8px;top:405.5px"><svg viewBox="0 0 16 16"><path d="M4.3 8.2L7 10.8L11.8 5.6" fill="none" stroke="#fff" stroke-width="1.7" stroke-linecap="round" stroke-linejoin="round"/></svg></div>
<div class="t " style="left:1030.30px;top:407.00px;font-size:14.6px;height:14.6px;color:#0c0d0e;letter-spacing:-0.38px;">查看</div>
<div class="cb c" style="left:1083.0px;top:405.5px"><svg viewBox="0 0 16 16"><path d="M4.3 8.2L7 10.8L11.8 5.6" fill="none" stroke="#fff" stroke-width="1.7" stroke-linecap="round" stroke-linejoin="round"/></svg></div>
<div class="t " style="left:1108.00px;top:407.00px;font-size:14.6px;height:14.6px;color:#0c0d0e;letter-spacing:-0.38px;">新建任务</div>
<div class="cb e" style="left:1190.3px;top:405.5px"></div>
<div class="t " style="left:1215.40px;top:407.00px;font-size:14.6px;height:14.6px;color:#0c0d0e;letter-spacing:-0.38px;">高级配置编辑与查看</div>
<div class="cb c" style="left:582.2px;top:460.9px"><svg viewBox="0 0 16 16"><path d="M4.3 8.2L7 10.8L11.8 5.6" fill="none" stroke="#fff" stroke-width="1.7" stroke-linecap="round" stroke-linejoin="round"/></svg></div>
<div class="t " style="left:606.40px;top:462.00px;font-size:14.6px;height:14.6px;color:#0c0d0e;letter-spacing:-0.38px;">数据连接</div>
<div class="cb c" style="left:1005.8px;top:460.9px"><svg viewBox="0 0 16 16"><path d="M4.3 8.2L7 10.8L11.8 5.6" fill="none" stroke="#fff" stroke-width="1.7" stroke-linecap="round" stroke-linejoin="round"/></svg></div>
<div class="t " style="left:1030.30px;top:462.00px;font-size:14.6px;height:14.6px;color:#0c0d0e;letter-spacing:-0.38px;">查看</div>
<div class="cb c" style="left:1083.0px;top:460.9px"><svg viewBox="0 0 16 16"><path d="M4.3 8.2L7 10.8L11.8 5.6" fill="none" stroke="#fff" stroke-width="1.7" stroke-linecap="round" stroke-linejoin="round"/></svg></div>
<div class="t " style="left:1108.00px;top:462.00px;font-size:14.6px;height:14.6px;color:#0c0d0e;letter-spacing:-0.38px;">新建连接</div>
<svg class="a" style="left:540.2px;top:517.5px" width="9.2" height="6" viewBox="0 0 9.2 6"><path d="M0.3 0.3H8.899999999999999Q9.2 0.6 8.799999999999999 1L5.1 5.7Q4.6 6 4.1 5.7L0.4 1Q0 0.6 0.3 0.3Z" fill="#a2a7b0"/></svg>
<div class="cb e" style="left:562.3px;top:512.3px"></div>
<div class="t " style="left:587.30px;top:513.00px;font-size:14.6px;height:14.6px;color:#0c0d0e;letter-spacing:-0.38px;">企业知识引擎</div>
<div class="cb e" style="left:582.2px;top:564.9px"></div>
<div class="t " style="left:606.40px;top:566.00px;font-size:14.6px;height:14.6px;color:#0c0d0e;letter-spacing:-0.38px;">知识库</div>
<div class="cb e" style="left:1005.8px;top:564.9px"></div>
<div class="t " style="left:1030.30px;top:566.00px;font-size:14.6px;height:14.6px;color:#0c0d0e;letter-spacing:-0.38px;">查看</div>
<div class="cb e" style="left:1083.0px;top:564.9px"></div>
<div class="t " style="left:1108.00px;top:566.00px;font-size:14.6px;height:14.6px;color:#0c0d0e;letter-spacing:-0.38px;">编辑</div>
<div class="cb e" style="left:1161.2px;top:564.9px"></div>
<div class="t " style="left:1185.80px;top:566.00px;font-size:14.6px;height:14.6px;color:#0c0d0e;letter-spacing:-0.38px;">新建</div>
<div class="cb e" style="left:582.2px;top:620.5px"></div>
<div class="t " style="left:606.00px;top:622.00px;font-size:14.6px;height:14.6px;color:#0c0d0e;letter-spacing:0.05px;">AI应用</div>
<div class="cb e" style="left:1005.8px;top:620.5px"></div>
<div class="t " style="left:1030.30px;top:622.00px;font-size:14.6px;height:14.6px;color:#0c0d0e;letter-spacing:-0.38px;">查看</div>
<div class="cb e" style="left:1083.0px;top:620.5px"></div>
<div class="t " style="left:1108.00px;top:622.00px;font-size:14.6px;height:14.6px;color:#0c0d0e;letter-spacing:-0.38px;">编辑</div>
<div class="cb e" style="left:1161.2px;top:620.5px"></div>
<div class="t " style="left:1185.80px;top:622.00px;font-size:14.6px;height:14.6px;color:#0c0d0e;letter-spacing:-0.38px;">新建</div>
<div class="cb e" style="left:582.2px;top:675.9px"></div>
<div class="t " style="left:606.40px;top:677.00px;font-size:14.6px;height:14.6px;color:#0c0d0e;letter-spacing:-0.38px;">数据源</div>
<div class="cb e" style="left:1005.8px;top:675.9px"></div>
<div class="t " style="left:1030.30px;top:677.00px;font-size:14.6px;height:14.6px;color:#0c0d0e;letter-spacing:-0.38px;">查看</div>
<div class="cb e" style="left:1083.0px;top:675.9px"></div>
<div class="t " style="left:1108.00px;top:677.00px;font-size:14.6px;height:14.6px;color:#0c0d0e;letter-spacing:-0.38px;">编辑</div>
<div class="cb e" style="left:1161.2px;top:675.9px"></div>
<div class="t " style="left:1185.80px;top:677.00px;font-size:14.6px;height:14.6px;color:#0c0d0e;letter-spacing:-0.38px;">新建</div>
<div class="red" style="left:954px;top:6px;width:109.5px;height:49px"></div>
<div class="red" style="left:295.8px;top:75px;width:107.2px;height:39px"></div>
<div class="red" style="left:67.3px;top:108px;width:120px;height:47.5px"></div>
<div class="red" style="left:234px;top:132px;width:235.2px;height:52.7px"></div>
<div class="wm" style="left:22.5px;top:65.5px">admin</div>
<div class="wm" style="left:472.2px;top:65.5px">admin</div>
<div class="wm" style="left:921.9px;top:65.5px">admin</div>
<div class="wm" style="left:1371.6px;top:65.5px">admin</div>
<div class="wm" style="left:1821.3px;top:65.5px">admin</div>
<div class="wm" style="left:22.5px;top:234.2px">admin</div>
<div class="wm" style="left:472.2px;top:234.2px">admin</div>
<div class="wm" style="left:921.9px;top:234.2px">admin</div>
<div class="wm" style="left:1371.6px;top:234.2px">admin</div>
<div class="wm" style="left:1821.3px;top:234.2px">admin</div>
<div class="wm" style="left:22.5px;top:402.8px">admin</div>
<div class="wm" style="left:472.2px;top:402.8px">admin</div>
<div class="wm" style="left:921.9px;top:402.8px">admin</div>
<div class="wm" style="left:1371.6px;top:402.8px">admin</div>
<div class="wm" style="left:1821.3px;top:402.8px">admin</div>
<div class="wm" style="left:22.5px;top:571.5px">admin</div>
<div class="wm" style="left:472.2px;top:571.5px">admin</div>
<div class="wm" style="left:921.9px;top:571.5px">admin</div>
<div class="wm" style="left:1371.6px;top:571.5px">admin</div>
<div class="wm" style="left:1821.3px;top:571.5px">admin</div>
<div class="wm" style="left:22.5px;top:740.1px">admin</div>
<div class="wm" style="left:472.2px;top:740.1px">admin</div>
<div class="wm" style="left:921.9px;top:740.1px">admin</div>
<div class="wm" style="left:1371.6px;top:740.1px">admin</div>
<div class="wm" style="left:1821.3px;top:740.1px">admin</div>
</div></body></html>
